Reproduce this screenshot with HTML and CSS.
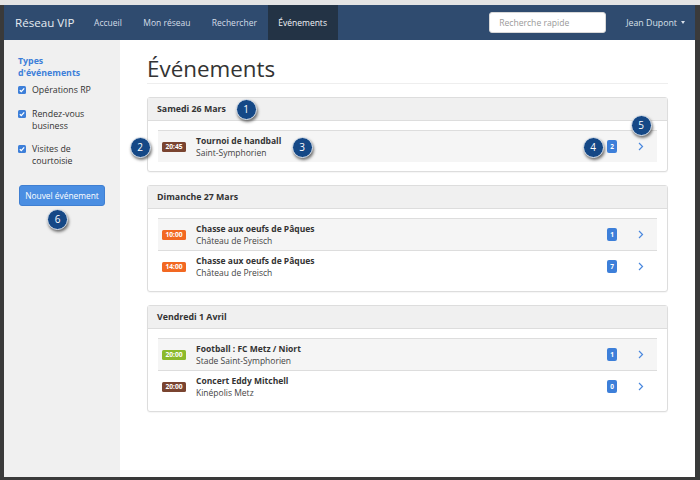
FILE: index.html
```html
<!DOCTYPE html>
<html lang="fr">
<head>
<meta charset="utf-8">
<title>Réseau VIP – Événements</title>
<link rel="stylesheet" href="styles.css">
</head>
<body>
<div class="window">
  <div class="app">
    <nav class="navbar">
      <a class="brand" href="#">Réseau VIP</a>
      <ul class="nav">
        <li><a href="#">Accueil</a></li>
        <li><a href="#">Mon réseau</a></li>
        <li><a href="#">Rechercher</a></li>
        <li class="active"><a href="#">Événements</a></li>
      </ul>
      <input class="search" type="text" placeholder="Recherche rapide">
      <a class="user" href="#">Jean Dupont <span class="caret"></span></a>
    </nav>
    <div class="layout">
      <aside class="sidebar">
        <h3 class="side-title">Types d'événements</h3>
        <label class="check"><span class="box"><svg viewBox="0 0 8 8" width="8" height="8"><polyline points="1.8,4.2 3.3,5.6 6.2,2.4" fill="none" stroke="#fff" stroke-width="1.3"/></svg></span><span>Opérations RP</span></label>
        <label class="check"><span class="box"><svg viewBox="0 0 8 8" width="8" height="8"><polyline points="1.8,4.2 3.3,5.6 6.2,2.4" fill="none" stroke="#fff" stroke-width="1.3"/></svg></span><span>Rendez-vous business</span></label>
        <label class="check"><span class="box"><svg viewBox="0 0 8 8" width="8" height="8"><polyline points="1.8,4.2 3.3,5.6 6.2,2.4" fill="none" stroke="#fff" stroke-width="1.3"/></svg></span><span>Visites de courtoisie</span></label>
        <button class="btn-new" type="button">Nouvel événement</button>
      </aside>
      <main class="content">
        <h1 class="page-title">Événements</h1>

        <section class="panel">
          <header class="panel-head">Samedi 26 Mars</header>
          <div class="panel-body">
            <div class="row">
              <span class="time brown">20:45</span>
              <div class="info"><strong>Tournoi de handball</strong><span>Saint-Symphorien</span></div>
              <span class="count">2</span>
              <svg class="chev" viewBox="0 0 6 9" width="6" height="9"><polyline points="1,1 4.5,4.5 1,8" fill="none" stroke="#4a88de" stroke-width="1.2"/></svg>
            </div>
          </div>
        </section>

        <section class="panel">
          <header class="panel-head">Dimanche 27 Mars</header>
          <div class="panel-body">
            <div class="row">
              <span class="time orange">10:00</span>
              <div class="info"><strong>Chasse aux oeufs de Pâques</strong><span>Château de Preisch</span></div>
              <span class="count">1</span>
              <svg class="chev" viewBox="0 0 6 9" width="6" height="9"><polyline points="1,1 4.5,4.5 1,8" fill="none" stroke="#4a88de" stroke-width="1.2"/></svg>
            </div>
            <div class="row">
              <span class="time orange">14:00</span>
              <div class="info"><strong>Chasse aux oeufs de Pâques</strong><span>Château de Preisch</span></div>
              <span class="count">7</span>
              <svg class="chev" viewBox="0 0 6 9" width="6" height="9"><polyline points="1,1 4.5,4.5 1,8" fill="none" stroke="#4a88de" stroke-width="1.2"/></svg>
            </div>
          </div>
        </section>

        <section class="panel">
          <header class="panel-head">Vendredi 1 Avril</header>
          <div class="panel-body">
            <div class="row">
              <span class="time green">20:00</span>
              <div class="info"><strong>Football : FC Metz / Niort</strong><span>Stade Saint-Symphorien</span></div>
              <span class="count">1</span>
              <svg class="chev" viewBox="0 0 6 9" width="6" height="9"><polyline points="1,1 4.5,4.5 1,8" fill="none" stroke="#4a88de" stroke-width="1.2"/></svg>
            </div>
            <div class="row">
              <span class="time brown">20:00</span>
              <div class="info"><strong>Concert Eddy Mitchell</strong><span>Kinépolis Metz</span></div>
              <span class="count">0</span>
              <svg class="chev" viewBox="0 0 6 9" width="6" height="9"><polyline points="1,1 4.5,4.5 1,8" fill="none" stroke="#4a88de" stroke-width="1.2"/></svg>
            </div>
          </div>
        </section>
      </main>
    </div>
  </div>

  <span class="marker m1">1</span>
  <span class="marker m2">2</span>
  <span class="marker m3">3</span>
  <span class="marker m4">4</span>
  <span class="marker m5">5</span>
  <span class="marker m6">6</span>
</div>
</body>
</html>
```

FILE: styles.css
```css
* { box-sizing: border-box; }

html, body {
  margin: 0;
  padding: 0;
}

body {
  font-family: "Open Sans", "Noto Sans", sans-serif;
  color: #333;
  background: #e4e4e4;
}

.window {
  position: relative;
  width: 700px;
  height: 480px;
  padding-top: 5px;
  background: #e4e4e4;
  overflow: hidden;
}

.app {
  height: 475px;
  border-left: 4px solid #3a3a3a;
  border-right: 5px solid #3a3a3a;
  border-bottom: 3px solid #3a3a3a;
  background: #fff;
  display: flex;
  flex-direction: column;
}

/* Navbar */
.navbar {
  height: 35px;
  flex: none;
  background: #2f4b6f;
  display: flex;
  align-items: center;
  padding: 0 10px 0 11px;
}

.brand {
  color: #e6ebf1;
  text-decoration: none;
  font-size: 11.6px;
  margin-right: 9px;
}

.nav {
  list-style: none;
  margin: 0;
  padding: 0;
  display: flex;
  align-self: stretch;
}

.nav li {
  display: flex;
  align-items: center;
}

.nav a {
  display: flex;
  align-items: center;
  height: 100%;
  padding: 0 10.7px;
  color: #d5dde7;
  text-decoration: none;
  font-size: 8.5px;
}

.nav .active a {
  background: #233345;
  color: #f2f4f7;
}

.search {
  margin-left: auto;
  width: 117px;
  height: 21px;
  border: 1px solid #d8d8d8;
  border-radius: 3px;
  padding: 0 9px;
  font-family: inherit;
  font-size: 8.6px;
  color: #555;
  background: #fff;
  outline: none;
}

.search::placeholder { color: #9a9a9a; }

.user {
  margin-left: 20px;
  color: #d9e0e9;
  text-decoration: none;
  font-size: 8.8px;
  display: flex;
  align-items: center;
}

.caret {
  display: inline-block;
  margin-left: 4px;
  border-left: 2.5px solid transparent;
  border-right: 2.5px solid transparent;
  border-top: 3px solid #d9e0e9;
}

/* Layout */
.layout {
  flex: 1;
  display: flex;
  min-height: 0;
}

.sidebar {
  width: 116px;
  flex: none;
  background: #f0f0f0;
  padding: 15px 22px 0 14px;
  font-size: 8.8px;
  line-height: 12px;
}

.side-title {
  margin: 0 0 5px;
  font-size: 8.8px;
  line-height: 12px;
  font-weight: 700;
  color: #3d7fd9;
}

.check {
  display: flex;
  align-items: flex-start;
  gap: 6px;
  margin-bottom: 11.5px;
  color: #333;
}

.box {
  flex: none;
  width: 8px;
  height: 8px;
  margin-top: 2px;
  border-radius: 1.5px;
  background: #3d7fd9;
  display: flex;
}

.btn-new {
  display: block;
  margin: 18px 0 0 1px;
  width: 86px;
  height: 21px;
  padding: 0;
  border: 1px solid #3f7fd2;
  border-radius: 3px;
  background: #4a8ee2;
  color: #fff;
  font-family: inherit;
  font-size: 8.4px;
}

/* Content */
.content {
  flex: 1;
  padding: 14.5px 27px 0 27px;
}

.page-title {
  margin: 0 0 13px;
  font-size: 22.4px;
  line-height: 27.5px;
  font-weight: 400;
  color: #333;
  padding-bottom: 1px;
  border-bottom: 1px solid #eee;
}

.panel {
  border: 1px solid #ddd;
  border-radius: 3px;
  margin-bottom: 13px;
  background: #fff;
  box-shadow: 0 1px 1px rgba(0,0,0,0.04);
}

.panel-head {
  height: 23px;
  background: #f0f0f0;
  border-bottom: 1px solid #ddd;
  padding: 0 9px;
  display: flex;
  align-items: center;
  font-size: 8.8px;
  font-weight: 700;
  color: #333;
}

.panel-body {
  padding: 9px 10px;
}

.row {
  height: 32px;
  border-top: 1px solid #ddd;
  display: flex;
  align-items: center;
  padding: 0 13px 0 4px;
}

.row:nth-child(odd) { background: #f5f5f5; }

.time {
  width: 24px;
  height: 10px;
  border-radius: 1.5px;
  color: #fff;
  font-size: 6.7px;
  font-weight: 700;
  display: flex;
  align-items: center;
  justify-content: center;
  margin-right: 10px;
}

.brown { background: #7a4430; }
.orange { background: #f26822; }
.green { background: #8cba2b; }

.info {
  flex: 1;
  display: flex;
  flex-direction: column;
  font-size: 8.5px;
  line-height: 12px;
}

.info strong { font-weight: 700; color: #333; }
.info span { color: #444; }

.count {
  width: 10px;
  height: 13px;
  border-radius: 2px;
  background: #3d7fd9;
  color: #fff;
  font-size: 6.5px;
  font-weight: 700;
  display: flex;
  align-items: center;
  justify-content: center;
  margin-right: 21px;
}

.chev { flex: none; }

/* Annotation markers */
.marker {
  position: absolute;
  width: 21px;
  height: 21px;
  border-radius: 50%;
  background: #154886;
  border: 1px solid #dfe6ef;
  box-shadow: 1px 2px 3px rgba(0,0,0,0.55);
  color: #fff;
  font-size: 10px;
  display: flex;
  align-items: center;
  justify-content: center;
}

.m1 { left: 235.5px; top: 98.5px; }
.m2 { left: 129.5px; top: 136.5px; }
.m3 { left: 291.5px; top: 136.5px; }
.m4 { left: 582.5px; top: 136.5px; }
.m5 { left: 630.5px; top: 114.5px; }
.m6 { left: 47px; top: 208.5px; }
```
